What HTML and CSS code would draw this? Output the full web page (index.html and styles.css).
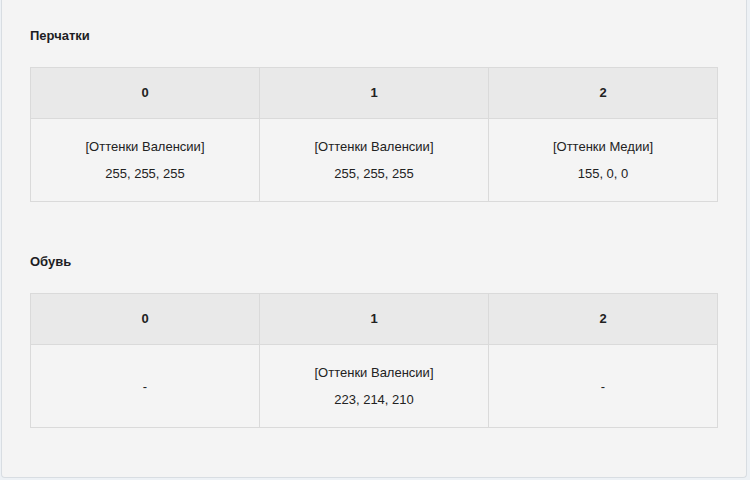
FILE: index.html
```html
<!DOCTYPE html>
<html lang="ru">
<head>
<meta charset="utf-8">
<link rel="stylesheet" href="styles.css">
</head>
<body>
<div class="panel">
  <section class="group">
    <h3 class="group-title">Перчатки</h3>
    <table class="grid">
      <thead>
        <tr><th>0</th><th>1</th><th>2</th></tr>
      </thead>
      <tbody>
        <tr>
          <td><div class="cell"><span>[Оттенки Валенсии]</span><span>255, 255, 255</span></div></td>
          <td><div class="cell"><span>[Оттенки Валенсии]</span><span>255, 255, 255</span></div></td>
          <td><div class="cell"><span>[Оттенки Медии]</span><span>155, 0, 0</span></div></td>
        </tr>
      </tbody>
    </table>
  </section>
  <section class="group">
    <h3 class="group-title">Обувь</h3>
    <table class="grid">
      <thead>
        <tr><th>0</th><th>1</th><th>2</th></tr>
      </thead>
      <tbody>
        <tr>
          <td><div class="cell"><span>-</span></div></td>
          <td><div class="cell"><span>[Оттенки Валенсии]</span><span>223, 214, 210</span></div></td>
          <td><div class="cell"><span>-</span></div></td>
        </tr>
      </tbody>
    </table>
  </section>
</div>
</body>
</html>
```
FILE: styles.css
```css
html, body {
  margin: 0;
  padding: 0;
}
body {
  background: #edf1f5;
  font-family: "Liberation Sans", Arial, sans-serif;
  font-size: 13px;
  color: #222;
  padding: 0 3px 0 1px;
}
.panel {
  background: #f4f4f4;
  border: 1px solid #d8dde2;
  border-top: none;
  border-radius: 0 0 4px 4px;
  padding: 28px 28px 49px;
  display: flex;
  flex-direction: column;
  gap: 52px;
}
.group-title {
  margin: 0 0 23px;
  font-size: 13px;
  line-height: 16px;
  font-weight: bold;
  color: #1d1d24;
}
.grid {
  width: 100%;
  border-collapse: collapse;
  table-layout: fixed;
}
.grid th, .grid td {
  border: 1px solid #dadada;
  text-align: center;
}
.grid th {
  background: #e9e9e9;
  font-weight: bold;
  line-height: 16px;
  padding: 17px 0;
}
.grid td {
  background: #f4f4f4;
  vertical-align: middle;
  padding: 20px 0;
}
.cell {
  display: flex;
  flex-direction: column;
  align-items: center;
  gap: 12px;
  line-height: 15px;
}
```
